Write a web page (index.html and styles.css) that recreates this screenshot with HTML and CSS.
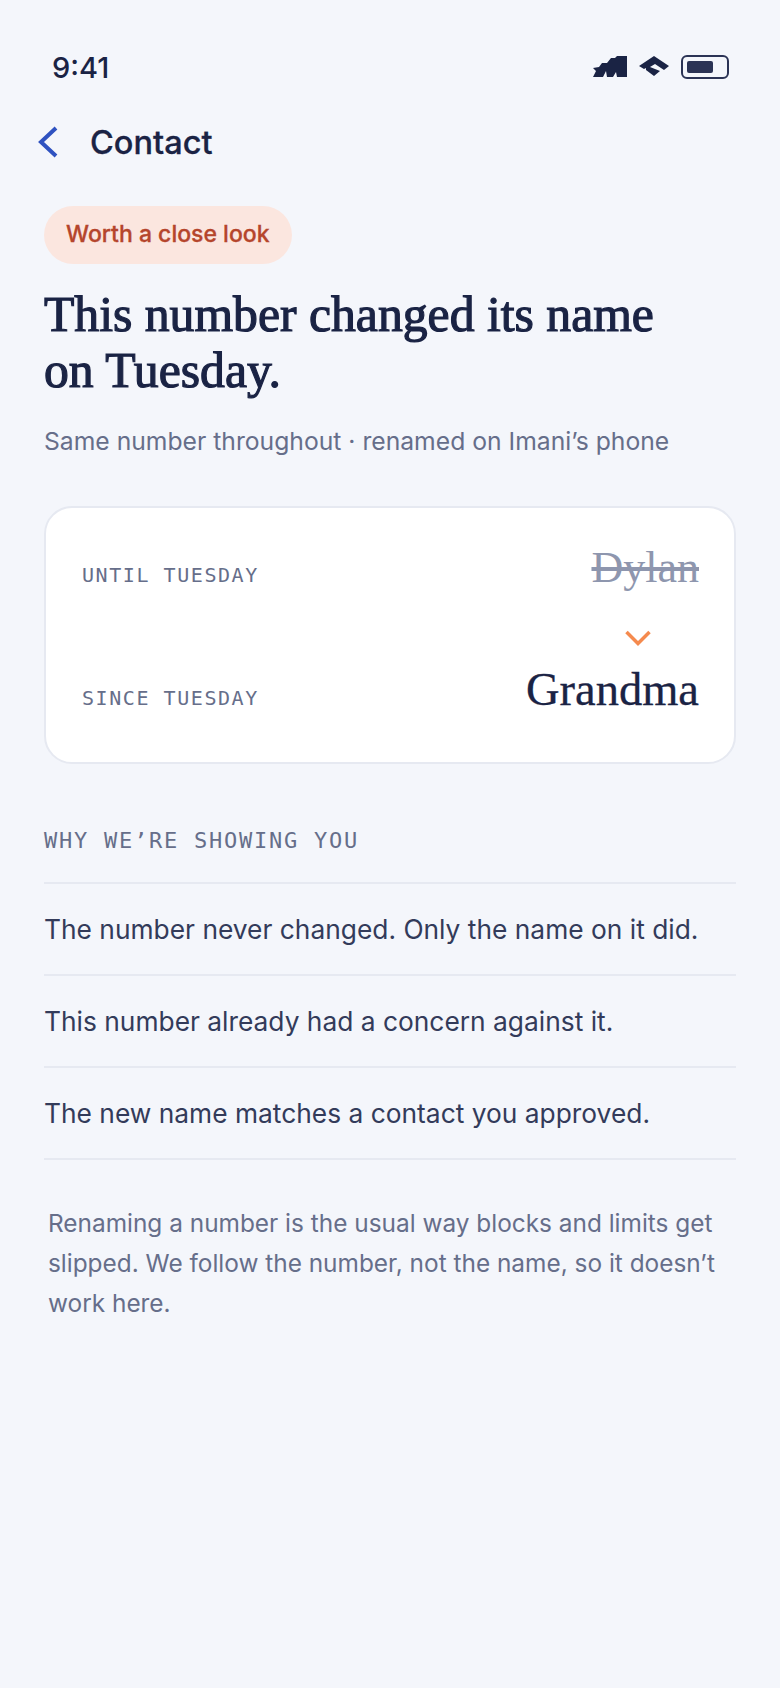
FILE: index.html
```html
<!DOCTYPE html>
<html lang="en">
<head>
    <meta charset="UTF-8">
    <meta name="viewport" content="width=device-width, initial-scale=1.0">
    <title>Contact</title>
    <link rel="stylesheet" href="styles.css">
</head>
<body>
    <div class="status">
        <span class="time">9:41</span>
        <div class="status-icons">
            <svg width="34" height="22" viewBox="0 0 34 22"><path d="M0 12 L6 11 L9 7 L14 7 L18 2 L22 2 L24 0 L34 0 L34 21 L24 21 L23 16 L20 21 L14 21 L13 15 L10 21 L0 21 L3 15 Z" fill="#1a2344"/></svg>
            <svg width="30" height="22" viewBox="0 0 30 22"><path d="M0 10 L15 0 L30 10 L25 14 L16 8 L11 11 L21 15 L15 20 L7 14 L7 12 L5 13 Z" fill="#1a2344"/></svg>
            <svg width="48" height="24" viewBox="0 0 48 24"><rect x="1" y="1" width="46" height="22" rx="5" fill="none" stroke="#2b3355" stroke-width="2"/><rect x="6" y="6" width="26" height="12" rx="2" fill="#2b3355"/></svg>
        </div>
    </div>

    <header class="nav">
        <svg class="back" width="20" height="32" viewBox="0 0 20 32"><path d="M18 2 L3 16 L18 30" fill="none" stroke="#2f52c0" stroke-width="4"/></svg>
        <h1>Contact</h1>
    </header>

    <main class="content">
        <span class="pill">Worth a close look</span>
        <h2 class="headline">This number changed its name on Tuesday.</h2>
        <p class="sub">Same number throughout · renamed on Imani’s phone</p>

        <section class="card">
            <div class="card-row">
                <span class="card-label">UNTIL TUESDAY</span>
                <span class="old-name">Dylan</span>
            </div>
            <div class="card-arrow">
                <svg width="26" height="16" viewBox="0 0 26 16"><path d="M1.5 2 L13 13.5 L24.5 2" fill="none" stroke="#f58a4e" stroke-width="3.5"/></svg>
            </div>
            <div class="card-row">
                <span class="card-label">SINCE TUESDAY</span>
                <span class="new-name">Grandma</span>
            </div>
        </section>

        <h3 class="why">WHY WE’RE SHOWING YOU</h3>
        <ul class="reasons">
            <li>The number never changed. Only the name on it did.</li>
            <li>This number already had a concern against it.</li>
            <li>The new name matches a contact you approved.</li>
        </ul>

        <p class="note">Renaming a number is the usual way blocks and limits get slipped. We follow the number, not the name, so it doesn’t work here.</p>
    </main>
</body>
</html>
```

FILE: styles.css
```css
* {
    box-sizing: border-box;
}
body {
    margin: 0;
    height: 1688px;
    overflow: hidden;
    background-color: #f4f6fb;
    font-family: 'Inter', sans-serif;
    color: #1a2344;
}
.status {
    display: flex;
    justify-content: space-between;
    align-items: center;
    padding: 48px 51px 0 52px;
    height: 86px;
}
.time {
    font-size: 29px;
    font-weight: 500;
}
.status-icons {
    display: flex;
    align-items: center;
    gap: 12px;
}
.nav {
    display: flex;
    align-items: center;
    gap: 32px;
    padding: 0 0 0 38px;
    margin-top: 20px;
    height: 72px;
}
.nav h1 {
    margin: 0;
    font-size: 32.5px;
    font-weight: 500;
    -webkit-text-stroke: 0.3px #1a2344;
}
.content {
    padding: 0 44px;
    margin-top: 28px;
}
.pill {
    display: inline-block;
    padding: 14px 22px;
    height: 58px;
    border-radius: 29px;
    background-color: #fbe6df;
    color: #b5452c;
    font-size: 23px;
    font-weight: 500;
    -webkit-text-stroke: 0.3px #b5452c;
}
.headline {
    margin: 23px 0 0 0;
    max-width: 640px;
    font-family: 'Liberation Serif', serif;
    font-size: 49.7px;
    line-height: 56px;
    font-weight: 400;
    -webkit-text-stroke: 1.2px #1a2344;
}
.sub {
    margin: 25px 0 0 0;
    font-size: 24.7px;
    line-height: 34px;
    color: #666e8a;
}
.card {
    margin-top: 48px;
    height: 258px;
    padding: 34px 35px 0 36px;
    background-color: #fff;
    border: 2px solid #e6e9f1;
    border-radius: 28px;
}
.card-row {
    display: flex;
    justify-content: space-between;
    align-items: baseline;
    height: 71px;
}
.card-label {
    font-family: 'DejaVu Sans Mono', monospace;
    font-size: 20px;
    letter-spacing: 1.56px;
    color: #666e8a;
}
.old-name {
    font-family: 'Liberation Serif', serif;
    font-size: 44px;
    color: #8e96ae;
    text-decoration: line-through;
}
.new-name {
    font-family: 'Liberation Serif', serif;
    font-size: 46.5px;
    color: #1a2344;
    -webkit-text-stroke: 0.3px #1a2344;
}
.card-arrow {
    display: flex;
    justify-content: flex-end;
    align-items: center;
    padding-right: 48px;
    height: 50px;
}
.why {
    margin: 62px 0 0 0;
    font-family: 'DejaVu Sans Mono', monospace;
    font-size: 22px;
    font-weight: 400;
    letter-spacing: 1.75px;
    line-height: 30px;
    color: #666e8a;
}
.reasons {
    list-style: none;
    margin: 26px 0 0 0;
    padding: 0;
    border-top: 2px solid #e6e9f1;
}
.reasons li {
    height: 92px;
    line-height: 90px;
    font-size: 26.35px;
    color: #333b5a;
    border-bottom: 2px solid #e6e9f1;
}
.note {
    margin: 43px 0 0 4px;
    font-size: 24.4px;
    line-height: 40px;
    color: #666e8a;
}
```
